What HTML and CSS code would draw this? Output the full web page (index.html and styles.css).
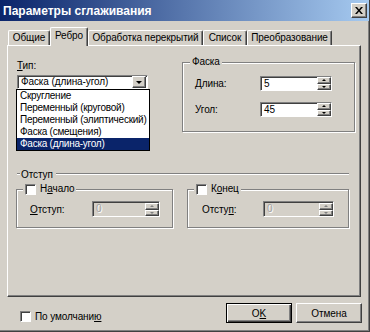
FILE: index.html
```html
<!DOCTYPE html>
<html lang="ru">
  <head>
    <meta charset="UTF-8" />
    <title>Параметры сглаживания</title>
    <link rel="stylesheet" href="styles.css">
  </head>
  <body>
    <div class="dialog">
      <div class="titlebar">
        <span class="title">Параметры сглаживания</span>
        <span class="close-btn">
          <svg width="8" height="7" viewBox="0 0 8 7"><path d="M0 0h2l2 2.5L6 0h2L5 3.5 8 7H6L4 4.5 2 7H0l3-3.5z" fill="#000"/></svg>
        </span>
      </div>

      <div class="tabs">
        <div class="tab tab-general">Общие</div>
        <div class="tab tab-edge active">Ребро</div>
        <div class="tab tab-overlap">Обработка перекрытий</div>
        <div class="tab tab-list">Список</div>
        <div class="tab tab-transform">Преобразование</div>
      </div>

      <div class="panel">
        <div class="top-row">
          <div class="type-col">
            <div class="lbl"><u>Т</u>ип:</div>
            <div class="combo">
              <span class="combo-text">Фаска (длина-угол)</span>
              <span class="combo-btn"><span class="arrow-down"></span></span>
              <ul class="dropdown">
                <li>Скругление</li>
                <li>Переменный (круговой)</li>
                <li>Переменный (элиптический)</li>
                <li>Фаска (смещения)</li>
                <li class="selected">Фаска (длина-угол)</li>
              </ul>
            </div>
          </div>

          <fieldset class="group chamfer">
            <legend>Фаска</legend>
            <div class="group-body">
              <div class="field-row">
                <span class="field-lbl">Длина:</span>
                <div class="spin">
                  <span class="spin-value">5</span>
                  <span class="spin-btns"><span class="spin-up"></span><span class="spin-down"></span></span>
                </div>
              </div>
              <div class="field-row">
                <span class="field-lbl">Угол:</span>
                <div class="spin">
                  <span class="spin-value">45</span>
                  <span class="spin-btns"><span class="spin-up"></span><span class="spin-down"></span></span>
                </div>
              </div>
            </div>
          </fieldset>
        </div>

        <div class="sep"><span>Отступ</span></div>

        <div class="offset-row">
          <fieldset class="group offset-start">
            <legend><span class="check"></span>Н<u>а</u>чало</legend>
            <div class="group-body">
              <div class="field-row">
                <span class="field-lbl"><u>О</u>тступ:</span>
                <div class="spin disabled">
                  <span class="spin-value">0</span>
                  <span class="spin-btns"><span class="spin-up"></span><span class="spin-down"></span></span>
                </div>
              </div>
            </div>
          </fieldset>
          <fieldset class="group offset-end">
            <legend><span class="check"></span>К<u>о</u>нец</legend>
            <div class="group-body">
              <div class="field-row">
                <span class="field-lbl">Отсту<u>п</u>:</span>
                <div class="spin disabled">
                  <span class="spin-value">0</span>
                  <span class="spin-btns"><span class="spin-up"></span><span class="spin-down"></span></span>
                </div>
              </div>
            </div>
          </fieldset>
        </div>
      </div>

      <div class="footer">
        <label class="default-opt"><span class="check"></span>По умолчани<u>ю</u></label>
        <div class="buttons">
          <button class="btn default">O<u>K</u></button>
          <button class="btn">Отмена</button>
        </div>
      </div>
    </div>
  </body>
</html>
```

FILE: styles.css
```css
body {
  margin: 0;
  padding: 0;
  background-color: #d4d0c8;
  font-family: "Liberation Sans", Arial, sans-serif;
  font-size: 10px;
  letter-spacing: -0.1px;
  color: #000;
}
.dialog {
  width: 370px;
  height: 332px;
  box-sizing: border-box;
  background-color: #d4d0c8;
  border-right: 1px solid #404040;
  border-bottom: 1px solid #404040;
  box-shadow: inset -1px -1px #808080;
  display: flex;
  flex-direction: column;
}
.titlebar {
  height: 21px;
  flex-shrink: 0;
  background: linear-gradient(to right, #0a246a, #a6caf0);
  display: flex;
  align-items: center;
  justify-content: space-between;
  padding: 0 2px 0 3px;
}
.title {
  color: #fff;
  font-weight: bold;
  font-size: 12px;
  letter-spacing: 0;
}
.close-btn {
  width: 14px;
  height: 13px;
  background-color: #d4d0c8;
  border: 1px solid;
  border-color: #fff #404040 #404040 #fff;
  box-shadow: inset -1px -1px #808080;
  display: flex;
  align-items: center;
  justify-content: center;
}
.tabs {
  display: flex;
  align-items: flex-end;
  height: 18px;
  margin: 6px 0 0 8px;
  flex-shrink: 0;
}
.tab {
  height: 15px;
  line-height: 14px;
  box-sizing: border-box;
  text-align: center;
  white-space: nowrap;
  border: 1px solid;
  border-bottom: none;
  border-color: #fff #404040 #fff #fff;
  box-shadow: inset -1px 0 #808080;
  border-radius: 2px 2px 0 0;
  background-color: #d4d0c8;
}
.tab.active {
  height: 19px;
  line-height: 15px;
  margin-bottom: -1px;
  position: relative;
  z-index: 1;
}
.tab-general { width: 42px; }
.tab-edge { width: 38px; }
.tab-overlap { width: 115px; }
.tab-list { width: 44px; }
.tab-transform { width: 85px; }
.panel {
  height: 252px;
  box-sizing: border-box;
  margin: 0 8px 0 7px;
  border: 1px solid;
  border-color: #fff #404040 #404040 #fff;
  box-shadow: inset -1px -1px #808080;
  flex-shrink: 0;
}
.top-row {
  display: flex;
  padding-top: 10px;
}
.type-col {
  margin: 4px 0 0 9px;
  width: 131px;
}
.lbl {
  height: 12px;
  line-height: 12px;
}
.combo {
  position: relative;
  margin-top: 3px;
  height: 14px;
  box-sizing: border-box;
  background: #fff;
  border: 1px solid;
  border-color: #808080 #fff #fff #808080;
  box-shadow: inset 1px 1px #404040;
  display: flex;
  align-items: center;
  justify-content: space-between;
}
.combo-text {
  padding-left: 3px;
  line-height: 12px;
  white-space: nowrap;
}
.combo-btn {
  width: 12px;
  height: 10px;
  margin-right: 1px;
  background: #d4d0c8;
  border: 1px solid;
  border-color: #fff #404040 #404040 #fff;
  box-shadow: inset -1px -1px #808080;
  display: flex;
  align-items: center;
  justify-content: center;
}
.arrow-down {
  width: 0;
  height: 0;
  border-left: 3px solid transparent;
  border-right: 3px solid transparent;
  border-top: 3px solid #000;
}
.dropdown {
  position: absolute;
  top: 13px;
  left: -2px;
  width: 132px;
  margin: 0;
  padding: 0;
  list-style: none;
  background: #fff;
  border: 1px solid #000;
  z-index: 2;
}
.dropdown li {
  height: 12px;
  line-height: 12px;
  padding-left: 3px;
  white-space: nowrap;
  letter-spacing: -0.25px;
}
.dropdown li.selected {
  background-color: #0a246a;
  color: #fff;
}
.group {
  margin: 0;
  padding: 0;
  border: 1px solid #808080;
  box-shadow: inset 1px 1px #fff, 1px 1px #fff;
  min-width: 0;
  box-sizing: border-box;
}
.group legend {
  padding: 0 2px;
  height: 12px;
  line-height: 12px;
  background: #d4d0c8;
  display: flex;
  align-items: center;
  white-space: nowrap;
}
.chamfer {
  margin-left: 34px;
  width: 173px;
  height: 76px;
}
.chamfer legend {
  margin-left: 7px;
}
.chamfer .group-body {
  padding: 8px 0 0 12px;
}
.field-row {
  display: flex;
  align-items: center;
  margin-bottom: 11px;
}
.field-lbl {
  width: 65px;
  white-space: nowrap;
}
.spin {
  width: 72px;
  height: 15px;
  box-sizing: border-box;
  background: #fff;
  border: 1px solid;
  border-color: #808080 #fff #fff #808080;
  box-shadow: inset 1px 1px #404040;
  display: flex;
  align-items: center;
  justify-content: space-between;
}
.spin-value {
  padding-left: 3px;
  line-height: 12px;
}
.spin-btns {
  display: flex;
  flex-direction: column;
  width: 14px;
  height: 13px;
  align-self: flex-end;
}
.spin-up,
.spin-down {
  flex: 1;
  background: #d4d0c8;
  border: 1px solid;
  border-color: #fff #404040 #404040 #fff;
  box-shadow: inset -1px -1px #808080;
  position: relative;
}
.spin-up::after,
.spin-down::after {
  content: '';
  position: absolute;
  left: 4px;
  top: 1px;
  border-left: 2px solid transparent;
  border-right: 2px solid transparent;
}
.spin-up::after { border-bottom: 2px solid #000; }
.spin-down::after { border-top: 2px solid #000; }
.spin.disabled {
  background: #d4d0c8;
}
.spin.disabled .spin-value {
  color: #a0a0a0;
  text-shadow: 1px 1px #fff;
}
.spin.disabled .spin-up::after { border-bottom-color: #808080; }
.spin.disabled .spin-down::after { border-top-color: #808080; }
.sep {
  display: flex;
  align-items: center;
  margin: 36px 11px 0 9px;
  height: 12px;
}
.sep::before,
.sep::after {
  content: '';
  border-top: 1px solid #808080;
  border-bottom: 1px solid #fff;
}
.sep::before {
  width: 3px;
  margin-right: 1px;
}
.sep::after {
  flex: 1;
  margin-left: 3px;
}
.offset-row {
  display: flex;
  margin: 3px 0 0 8px;
}
.offset-start {
  width: 157px;
  height: 45px;
}
.offset-start legend {
  margin-left: 6px;
}
.offset-start .group-body {
  padding: 6px 0 0 13px;
}
.offset-start .field-lbl {
  width: 62px;
}
.offset-start .spin {
  width: 68px;
  height: 16px;
}
.offset-end {
  margin-left: 14px;
  width: 162px;
  height: 45px;
}
.offset-end legend {
  margin-left: 6px;
}
.offset-end .group-body {
  padding: 6px 0 0 14px;
}
.offset-end .field-lbl {
  width: 61px;
}
.offset-end .spin {
  width: 71px;
  height: 16px;
}
.check {
  width: 11px;
  height: 11px;
  box-sizing: border-box;
  background: #fff;
  border: 1px solid;
  border-color: #808080 #fff #fff #808080;
  box-shadow: inset 1px 1px #404040;
  margin-right: 4px;
  display: inline-block;
  flex-shrink: 0;
}
.footer {
  display: flex;
  align-items: center;
  justify-content: space-between;
  margin: 6px 7px 0 20px;
  height: 20px;
}
.default-opt {
  display: flex;
  align-items: center;
  margin-top: 7px;
}
.buttons {
  display: flex;
  gap: 4px;
}
.btn {
  width: 66px;
  height: 20px;
  padding: 0;
  font-family: "Liberation Sans", Arial, sans-serif;
  font-size: 10px;
  letter-spacing: -0.1px;
  color: #000;
  background: #d4d0c8;
  border: 1px solid;
  border-color: #fff #404040 #404040 #fff;
  box-shadow: inset -1px -1px #808080;
}
.btn.default {
  border: 1px solid #000;
  box-shadow: inset 1px 1px #fff, inset -1px -1px #404040, inset -2px -2px #808080;
}
```
